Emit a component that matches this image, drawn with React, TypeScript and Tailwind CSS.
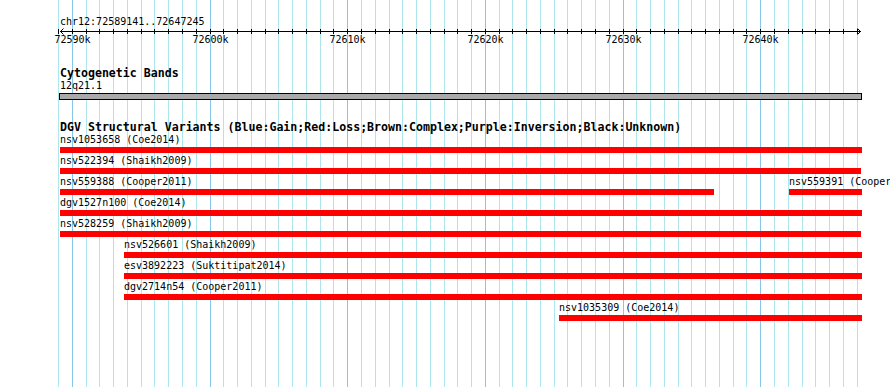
import React from 'react';

const START = 72589141;
const END = 72647245;
const LEFT = 60;
const RIGHT = 860;

const toX = (bp: number) => LEFT + ((bp - START) * (RIGHT - LEFT)) / (END - START);

type Feature = { name: string; x1: number; x2: number };

// each row can hold more than one feature
const rows: Feature[][] = [
  [{ name: 'nsv1053658 (Coe2014)', x1: 60, x2: 862 }],
  [{ name: 'nsv522394 (Shaikh2009)', x1: 60, x2: 861 }],
  [
    { name: 'nsv559388 (Cooper2011)', x1: 60, x2: 714 },
    { name: 'nsv559391 (Cooper2011)', x1: 789, x2: 862 },
  ],
  [{ name: 'dgv1527n100 (Coe2014)', x1: 60, x2: 862 }],
  [{ name: 'nsv528259 (Shaikh2009)', x1: 60, x2: 861 }],
  [{ name: 'nsv526601 (Shaikh2009)', x1: 124, x2: 862 }],
  [{ name: 'esv3892223 (Suktitipat2014)', x1: 124, x2: 862 }],
  [{ name: 'dgv2714n54 (Cooper2011)', x1: 124, x2: 862 }],
  [{ name: 'nsv1035309 (Coe2014)', x1: 559, x2: 862 }],
];

const ticks: { x: number; major: boolean; label: string }[] = [];
for (let k = 72589; k <= 72647; k++) {
  ticks.push({ x: Math.round(toX(k * 1000)), major: k % 10 === 0, label: `${k}k` });
}

const GridLines: React.FC = () => (
  <svg className="absolute inset-0" width={890} height={387}>
    {ticks.map(t => (
      <rect key={t.x} x={t.x} y={0} width={1} height={387} fill={t.major ? '#86c6ea' : '#aee6ee'} />
    ))}
  </svg>
);

const Ruler: React.FC = () => (
  <svg width={890} height={67} className="block text-[10px]" shapeRendering="crispEdges">
    <text x={60} y={25} fill="#000">chr12:72589141..72647245</text>
    <rect x={60} y={31} width={801} height={1} fill="#000" />
    {ticks.map(t => (
      <rect key={t.x} x={t.x} y={29} width={1} height={5} fill="#000" />
    ))}
    <path d="M63.5 28.5 L60.5 31.5 L63.5 34.5" stroke="#000" fill="none" shapeRendering="auto" />
    <path d="M857.5 28.5 L860.5 31.5 L857.5 34.5" stroke="#000" fill="none" shapeRendering="auto" />
    {ticks.filter(t => t.major).map(t => (
      <text key={t.x} x={t.x + 0.5} y={43} textAnchor="middle" fill="#000">
        {t.label}
      </text>
    ))}
  </svg>
);

const App: React.FC = () => {
  return (
    <div className="relative w-[890px] h-[387px] bg-white overflow-hidden text-black font-['DejaVu_Sans_Mono',monospace]">
      <GridLines />
      <div className="relative">
        <Ruler />

        {/* cytogenetic bands */}
        <div className="pl-[60px] h-[13px] leading-[13px] text-[11.6px] font-bold whitespace-nowrap">Cytogenetic Bands</div>
        <div className="pl-[60px] h-[12px] leading-[12px] text-[10px]">12q21.1</div>
        <div className="ml-[59px] mt-[1px] w-[803px] h-[7px] border border-black bg-[#a9a9a9]" />

        {/* DGV */}
        <div className="mt-[21px] pl-[60px] h-[13px] leading-[13px] text-[11.6px] font-bold whitespace-nowrap">
          DGV Structural Variants (Blue:Gain;Red:Loss;Brown:Complex;Purple:Inversion;Black:Unknown)
        </div>
        <div className="flex flex-col">
          {rows.map((row, i) => (
            <div key={i} className="relative h-[21px]">
              {row.map(f => (
                <div key={f.name} className="absolute top-0" style={{ left: f.x1 }}>
                  <div className="h-[12px] leading-[12px] text-[10px] whitespace-nowrap">{f.name}</div>
                  <div className="mt-[1px] h-[6px] bg-[#ff0000]" style={{ width: f.x2 - f.x1 }} />
                </div>
              ))}
            </div>
          ))}
        </div>
      </div>
    </div>
  );
};

export default App;
